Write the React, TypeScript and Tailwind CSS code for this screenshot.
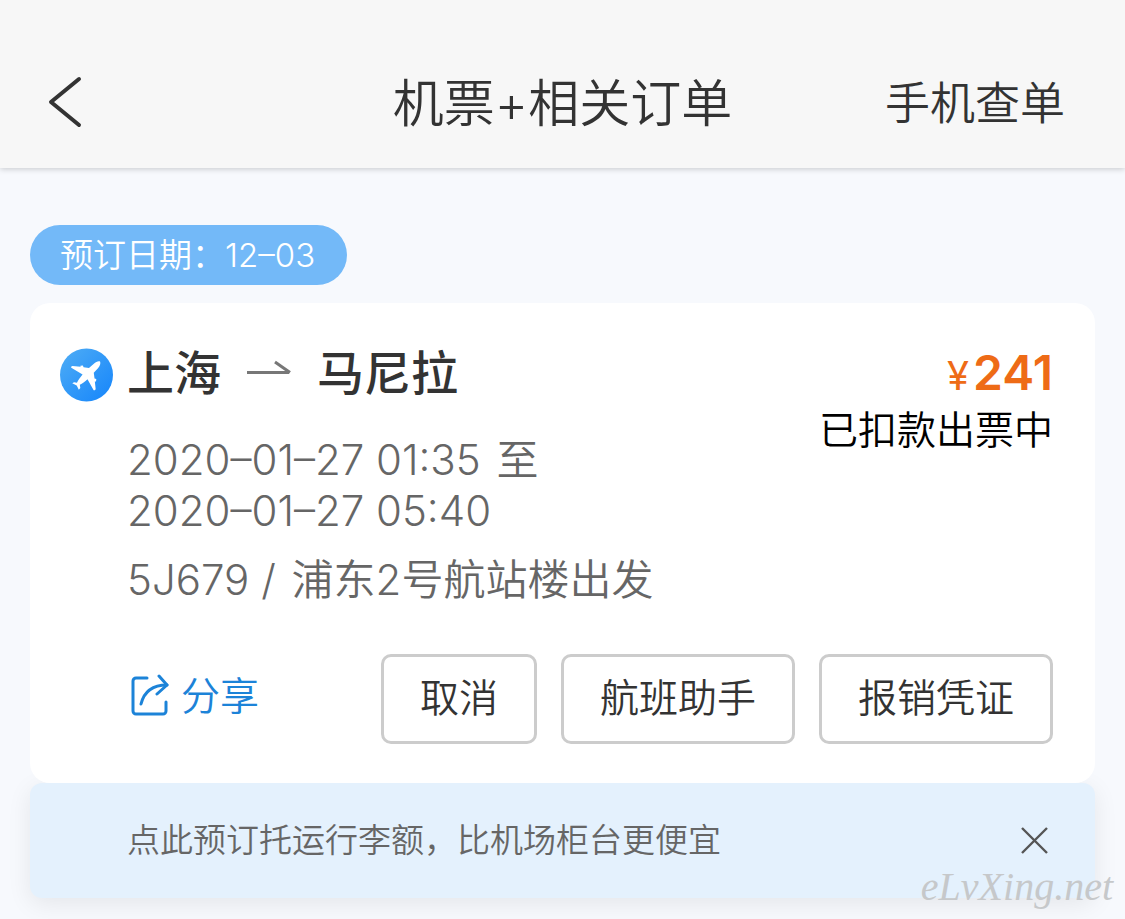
import { useState } from 'react'

const order = {
  bookedOn: '12–03',
  from: '上海',
  to: '马尼拉',
  departure: '2020–01–27 01:35',
  arrival: '2020–01–27 05:40',
  flight: '5J679',
  terminal: '浦东2号航站楼出发',
  price: 241,
  status: '已扣款出票中',
}

const actions = ['取消', '航班助手', '报销凭证']

export default function App() {
  const [showNotice, setShowNotice] = useState(true)

  return (
    <div className="relative min-h-screen overflow-hidden bg-[#f7f9fd] font-['Inter','Noto_Sans_CJK_SC',sans-serif] font-[350] text-[#333]">
      <Header />

      <main className="px-[30px] pt-[57px] pb-5">
        <p className="mb-[18px] flex h-[60px] w-fit items-center rounded-full bg-[#73b9f8] pr-8 pl-[30px] text-[33px] leading-none whitespace-nowrap text-white">
          预订日期：{order.bookedOn}
        </p>

        {/* relative keeps the card above the notice's shadow */}
        <article className="relative rounded-[20px] bg-white pt-[39px] pr-[42px] pb-[39px] pl-[30px]">
          <div className="flex items-start justify-between">
            <div className="flex gap-[14px]">
              <PlaneBadge />
              <div>
                <h2 className="flex items-center text-[47px] leading-[62px] font-medium">
                  {order.from}
                  <RouteArrow />
                  {order.to}
                </h2>
                <p className="mt-[30px] text-[42px] leading-[51px] text-[#666]">
                  {order.departure} <span className="ml-1">至</span>
                  <br />
                  {order.arrival}
                </p>
                <p className="mt-[18px] text-[42px] leading-[51px] text-[#666]">
                  {order.flight} <span className="mr-1">/</span> {order.terminal}
                </p>
              </div>
            </div>

            <div className="text-right whitespace-nowrap">
              <p className="text-[48px] leading-[62px] font-semibold text-[#ee6b16]">
                <span className="mr-1 text-[40px] font-normal">¥</span>
                {order.price}
              </p>
              <p className="text-[39px] leading-[45px] text-black">{order.status}</p>
            </div>
          </div>

          <div className="mt-[49px] flex items-start justify-between pl-[68px]">
            <button type="button" className="flex h-[82px] items-center gap-3 text-[39px] leading-none text-[#1c83d8]">
              <ShareIcon />
              分享
            </button>
            <div className="flex gap-6">
              {actions.map((label) => (
                <button
                  key={label}
                  type="button"
                  className="h-[90px] rounded-[10px] border-[3px] border-[#ccc] px-9 pb-[3px] text-[39px] leading-none whitespace-nowrap"
                >
                  {label}
                </button>
              ))}
            </div>
          </div>
        </article>

        {showNotice && (
          <aside className="flex h-[115px] items-center justify-between rounded-[12px] bg-[#e4f1fd] pr-[45px] pl-[97px] text-[33px] text-[#666] shadow-[0_6px_24px_rgba(0,0,0,0.08)]">
            <a href="#baggage">点此预订托运行李额，比机场柜台更便宜</a>
            <button type="button" aria-label="关闭" onClick={() => setShowNotice(false)}>
              <CloseIcon />
            </button>
          </aside>
        )}
      </main>

      <span className="pointer-events-none absolute right-3 bottom-3 font-['Liberation_Serif',serif] text-[40px] leading-none font-normal text-[#c6c8ca] italic">
        eLvXing.net
      </span>
    </div>
  )
}

function Header() {
  return (
    <header className="relative grid h-[168px] grid-cols-[1fr_auto_1fr] items-center bg-[#f7f7f7] px-[48px] pt-[38px] shadow-[0_1px_6px_rgba(0,0,0,0.2)]">
      <button type="button" aria-label="返回" className="justify-self-start">
        <svg width="36" height="54" viewBox="0 0 36 54" fill="none" stroke="#333" strokeWidth="4" strokeLinecap="round" strokeLinejoin="round">
          <path d="M31 3 3 26l28 23" />
        </svg>
      </button>
      <h1 className="text-[51px] leading-none">机票+相关订单</h1>
      <a href="#lookup" className="justify-self-end pr-3 text-[45px] leading-none">
        手机查单
      </a>
    </header>
  )
}

/* --------------------------------- icons -------------------------------- */

function PlaneBadge() {
  return (
    <svg className="mt-[6px] shrink-0" width="53" height="54" viewBox="0 0 54 54">
      <defs>
        <linearGradient id="plane-bg" x1="0" y1="0" x2="1" y2="1">
          <stop offset="0" stopColor="#4fadf5" />
          <stop offset="1" stopColor="#1585fb" />
        </linearGradient>
      </defs>
      <circle cx="27" cy="27" r="27" fill="url(#plane-bg)" />
      <path
        fill="#fff"
        d="M40.800 13.200C39.300 12.400 36.500 13.500 34.500 15.500L29.500 19.800L24 19L23.300 17.200L20.800 17.500L21 18.600L12.800 17.800C11.500 18 11 19 11.500 19.700L23 26.500C20.500 29.500 18.500 32.300 17.300 34.800L14.300 34.300L12.500 35.500L17 37.600L19.200 42L20.700 40.300L20.200 37C22.800 35.700 25.300 33.700 28 31.300L34.300 42.500C35.200 43 36.200 42.300 36.300 41L35.500 33.500L36.700 33.600L37 31L35.200 30.500L34.400 24.700L38.700 20C40.700 18 41.700 14.800 40.800 13.200Z"
      />
    </svg>
  )
}

function RouteArrow() {
  return (
    <svg className="mx-[25px] mb-1" width="46" height="22" viewBox="0 0 46 22" fill="none" stroke="#777" strokeWidth="3">
      <path d="M1 12.500h42M29 2l15 10.500" />
    </svg>
  )
}

function ShareIcon() {
  return (
    <svg className="ml-[3px]" width="38" height="42" viewBox="0 0 38 42" fill="none" stroke="currentColor" strokeWidth="3" strokeLinecap="round" strokeLinejoin="round">
      <path d="M16 4H5a3 3 0 0 0-3 3v30a3 3 0 0 0 3 3h27a3 3 0 0 0 3-3V28" />
      <path d="M28 2l8 9-10 9" />
      <path d="M36 11C22 11 13 18 10 30" />
    </svg>
  )
}

function CloseIcon() {
  return (
    <svg width="30" height="30" viewBox="0 0 30 30" fill="none" stroke="#555" strokeWidth="2.4">
      <path d="m2 2 25 25M27 2 2 27" />
    </svg>
  )
}
